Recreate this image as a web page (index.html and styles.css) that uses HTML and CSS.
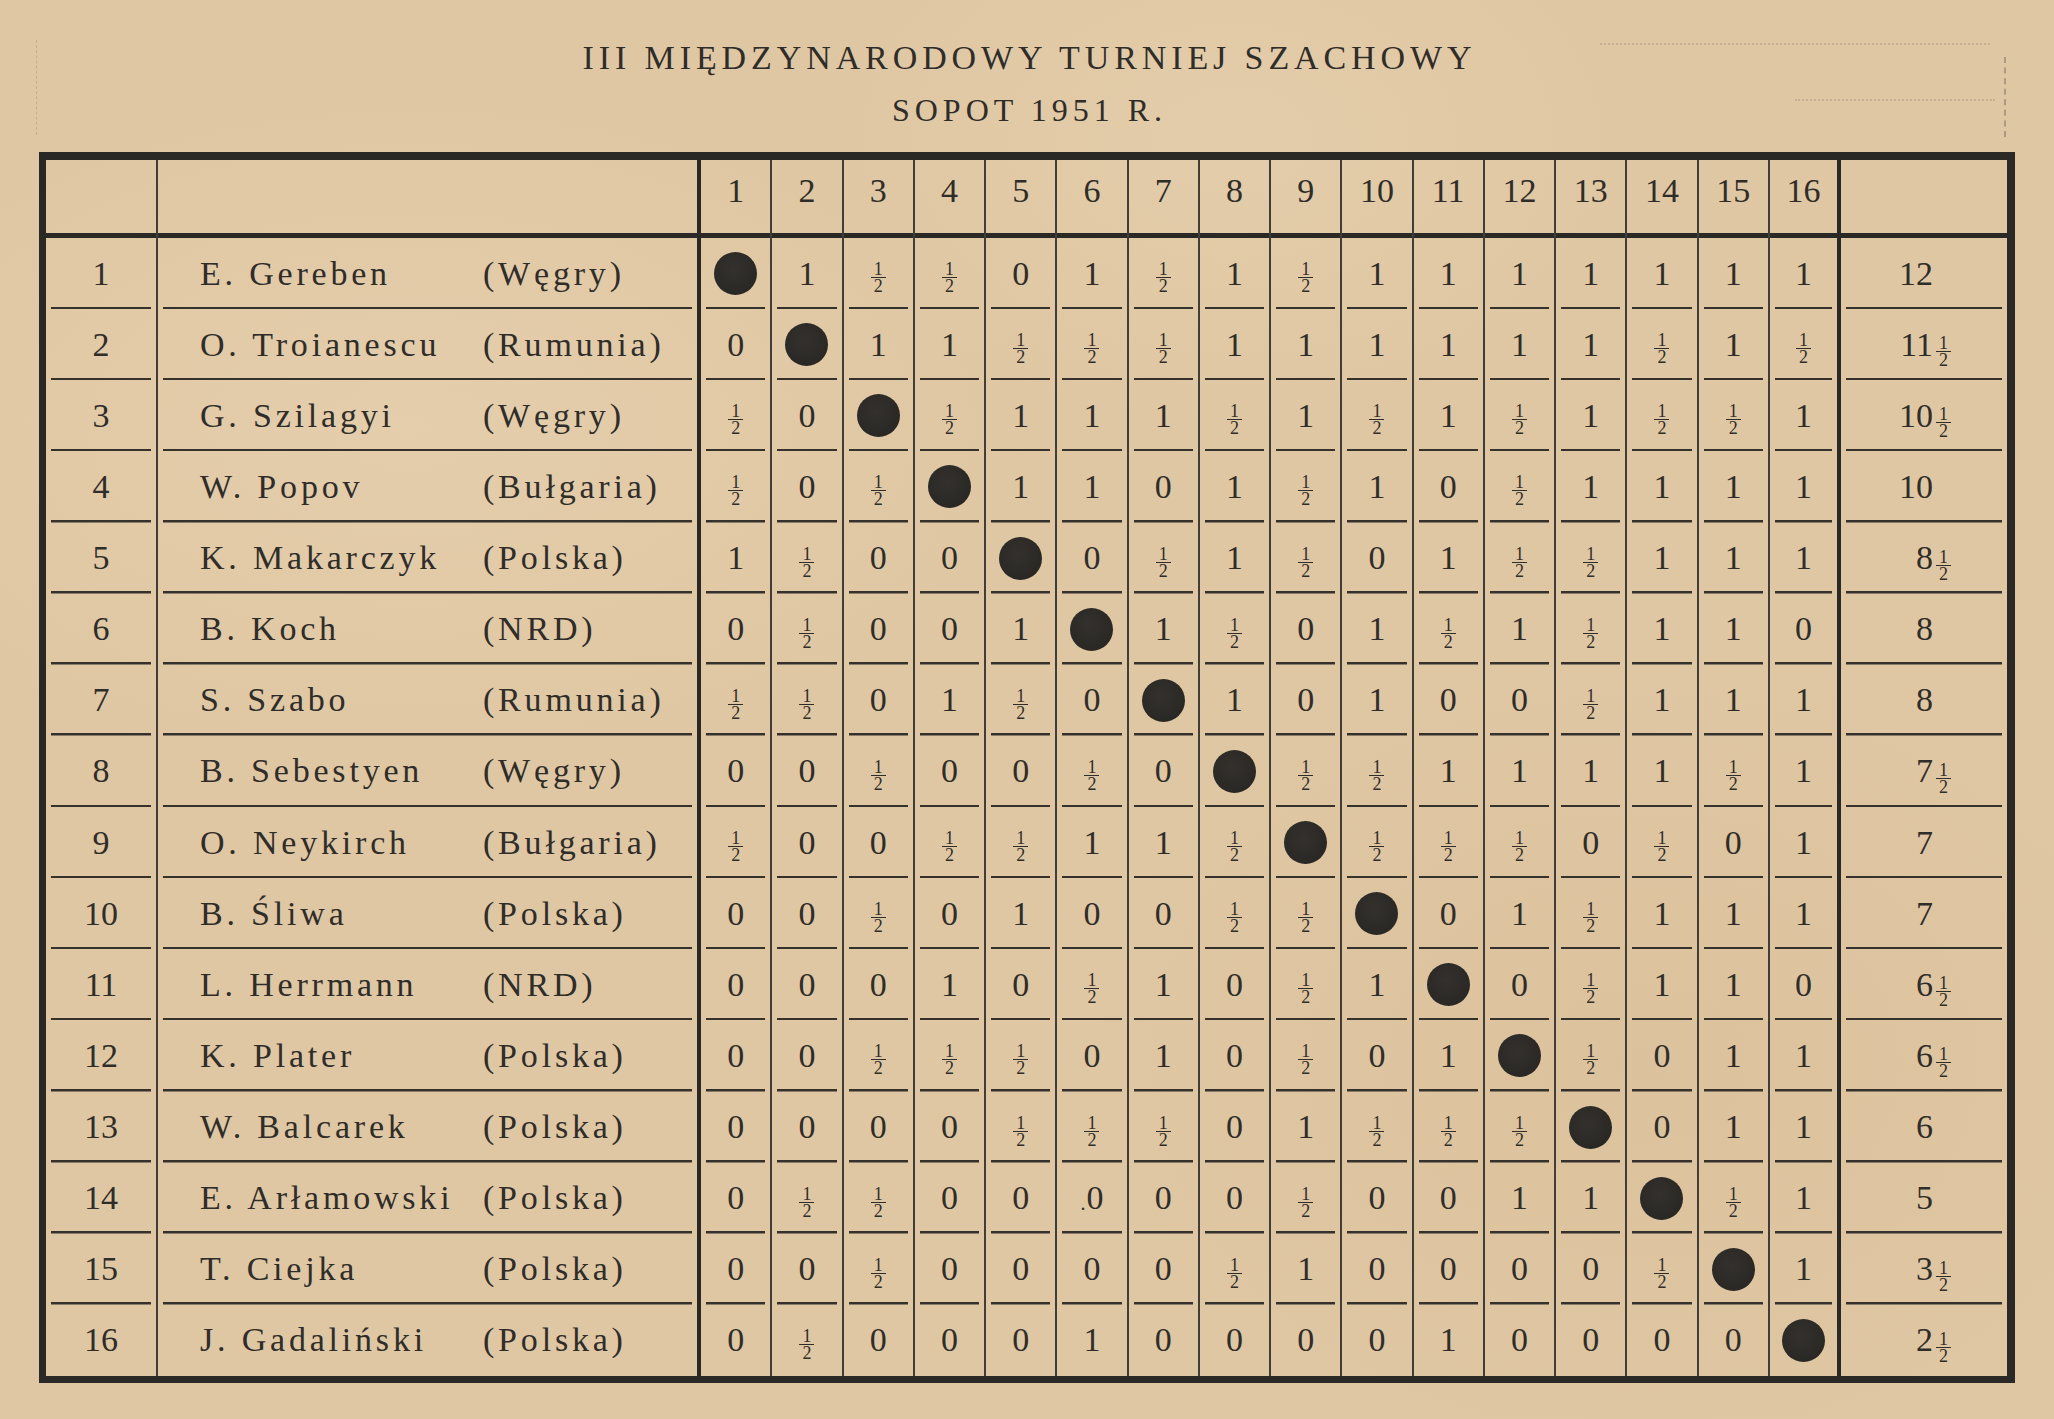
FILE: index.html
```html
<!DOCTYPE html>
<html lang="pl">
<head>
<meta charset="utf-8">
<title>III Międzynarodowy Turniej Szachowy — Sopot 1951 r.</title>
<link rel="stylesheet" href="styles.css">
</head>
<body>
<div class="page">
  <header class="heading">
    <div class="l1">III MIĘDZYNARODOWY TURNIEJ SZACHOWY</div>
    <div class="l2">SOPOT 1951 R.</div>
  </header>

  <section class="table">
    <div class="row head">
      <div class="n"></div><div class="nm"></div>
      <div class="g">1</div><div class="g">2</div><div class="g">3</div><div class="g">4</div><div class="g">5</div><div class="g">6</div><div class="g">7</div><div class="g">8</div><div class="g">9</div><div class="g">10</div><div class="g">11</div><div class="g">12</div><div class="g">13</div><div class="g">14</div><div class="g">15</div><div class="g">16</div>
      <div class="s"></div>
    </div>

    <div class="row">
      <div class="n">1</div><div class="nm"><span class="pl">E. Gereben</span><span>(Węgry)</span></div>
      <div class="g"><span class="dot"></span></div><div class="g">1</div><div class="g"><span class="fr"><span>1</span><span>2</span></span></div><div class="g"><span class="fr"><span>1</span><span>2</span></span></div><div class="g">0</div><div class="g">1</div><div class="g"><span class="fr"><span>1</span><span>2</span></span></div><div class="g">1</div><div class="g"><span class="fr"><span>1</span><span>2</span></span></div><div class="g">1</div><div class="g">1</div><div class="g">1</div><div class="g">1</div><div class="g">1</div><div class="g">1</div><div class="g">1</div>
      <div class="s"><span class="int">12</span></div>
    </div>

    <div class="row">
      <div class="n">2</div><div class="nm"><span class="pl">O. Troianescu</span><span>(Rumunia)</span></div>
      <div class="g">0</div><div class="g"><span class="dot"></span></div><div class="g">1</div><div class="g">1</div><div class="g"><span class="fr"><span>1</span><span>2</span></span></div><div class="g"><span class="fr"><span>1</span><span>2</span></span></div><div class="g"><span class="fr"><span>1</span><span>2</span></span></div><div class="g">1</div><div class="g">1</div><div class="g">1</div><div class="g">1</div><div class="g">1</div><div class="g">1</div><div class="g"><span class="fr"><span>1</span><span>2</span></span></div><div class="g">1</div><div class="g"><span class="fr"><span>1</span><span>2</span></span></div>
      <div class="s"><span class="int">11</span><span class="fr"><span>1</span><span>2</span></span></div>
    </div>

    <div class="row">
      <div class="n">3</div><div class="nm"><span class="pl">G. Szilagyi</span><span>(Węgry)</span></div>
      <div class="g"><span class="fr"><span>1</span><span>2</span></span></div><div class="g">0</div><div class="g"><span class="dot"></span></div><div class="g"><span class="fr"><span>1</span><span>2</span></span></div><div class="g">1</div><div class="g">1</div><div class="g">1</div><div class="g"><span class="fr"><span>1</span><span>2</span></span></div><div class="g">1</div><div class="g"><span class="fr"><span>1</span><span>2</span></span></div><div class="g">1</div><div class="g"><span class="fr"><span>1</span><span>2</span></span></div><div class="g">1</div><div class="g"><span class="fr"><span>1</span><span>2</span></span></div><div class="g"><span class="fr"><span>1</span><span>2</span></span></div><div class="g">1</div>
      <div class="s"><span class="int">10</span><span class="fr"><span>1</span><span>2</span></span></div>
    </div>

    <div class="row">
      <div class="n">4</div><div class="nm"><span class="pl">W. Popov</span><span>(Bułgaria)</span></div>
      <div class="g"><span class="fr"><span>1</span><span>2</span></span></div><div class="g">0</div><div class="g"><span class="fr"><span>1</span><span>2</span></span></div><div class="g"><span class="dot"></span></div><div class="g">1</div><div class="g">1</div><div class="g">0</div><div class="g">1</div><div class="g"><span class="fr"><span>1</span><span>2</span></span></div><div class="g">1</div><div class="g">0</div><div class="g"><span class="fr"><span>1</span><span>2</span></span></div><div class="g">1</div><div class="g">1</div><div class="g">1</div><div class="g">1</div>
      <div class="s"><span class="int">10</span></div>
    </div>

    <div class="row">
      <div class="n">5</div><div class="nm"><span class="pl">K. Makarczyk</span><span>(Polska)</span></div>
      <div class="g">1</div><div class="g"><span class="fr"><span>1</span><span>2</span></span></div><div class="g">0</div><div class="g">0</div><div class="g"><span class="dot"></span></div><div class="g">0</div><div class="g"><span class="fr"><span>1</span><span>2</span></span></div><div class="g">1</div><div class="g"><span class="fr"><span>1</span><span>2</span></span></div><div class="g">0</div><div class="g">1</div><div class="g"><span class="fr"><span>1</span><span>2</span></span></div><div class="g"><span class="fr"><span>1</span><span>2</span></span></div><div class="g">1</div><div class="g">1</div><div class="g">1</div>
      <div class="s"><span class="int">8</span><span class="fr"><span>1</span><span>2</span></span></div>
    </div>

    <div class="row">
      <div class="n">6</div><div class="nm"><span class="pl">B. Koch</span><span>(NRD)</span></div>
      <div class="g">0</div><div class="g"><span class="fr"><span>1</span><span>2</span></span></div><div class="g">0</div><div class="g">0</div><div class="g">1</div><div class="g"><span class="dot"></span></div><div class="g">1</div><div class="g"><span class="fr"><span>1</span><span>2</span></span></div><div class="g">0</div><div class="g">1</div><div class="g"><span class="fr"><span>1</span><span>2</span></span></div><div class="g">1</div><div class="g"><span class="fr"><span>1</span><span>2</span></span></div><div class="g">1</div><div class="g">1</div><div class="g">0</div>
      <div class="s"><span class="int">8</span></div>
    </div>

    <div class="row">
      <div class="n">7</div><div class="nm"><span class="pl">S. Szabo</span><span>(Rumunia)</span></div>
      <div class="g"><span class="fr"><span>1</span><span>2</span></span></div><div class="g"><span class="fr"><span>1</span><span>2</span></span></div><div class="g">0</div><div class="g">1</div><div class="g"><span class="fr"><span>1</span><span>2</span></span></div><div class="g">0</div><div class="g"><span class="dot"></span></div><div class="g">1</div><div class="g">0</div><div class="g">1</div><div class="g">0</div><div class="g">0</div><div class="g"><span class="fr"><span>1</span><span>2</span></span></div><div class="g">1</div><div class="g">1</div><div class="g">1</div>
      <div class="s"><span class="int">8</span></div>
    </div>

    <div class="row">
      <div class="n">8</div><div class="nm"><span class="pl">B. Sebestyen</span><span>(Węgry)</span></div>
      <div class="g">0</div><div class="g">0</div><div class="g"><span class="fr"><span>1</span><span>2</span></span></div><div class="g">0</div><div class="g">0</div><div class="g"><span class="fr"><span>1</span><span>2</span></span></div><div class="g">0</div><div class="g"><span class="dot"></span></div><div class="g"><span class="fr"><span>1</span><span>2</span></span></div><div class="g"><span class="fr"><span>1</span><span>2</span></span></div><div class="g">1</div><div class="g">1</div><div class="g">1</div><div class="g">1</div><div class="g"><span class="fr"><span>1</span><span>2</span></span></div><div class="g">1</div>
      <div class="s"><span class="int">7</span><span class="fr"><span>1</span><span>2</span></span></div>
    </div>

    <div class="row">
      <div class="n">9</div><div class="nm"><span class="pl">O. Neykirch</span><span>(Bułgaria)</span></div>
      <div class="g"><span class="fr"><span>1</span><span>2</span></span></div><div class="g">0</div><div class="g">0</div><div class="g"><span class="fr"><span>1</span><span>2</span></span></div><div class="g"><span class="fr"><span>1</span><span>2</span></span></div><div class="g">1</div><div class="g">1</div><div class="g"><span class="fr"><span>1</span><span>2</span></span></div><div class="g"><span class="dot"></span></div><div class="g"><span class="fr"><span>1</span><span>2</span></span></div><div class="g"><span class="fr"><span>1</span><span>2</span></span></div><div class="g"><span class="fr"><span>1</span><span>2</span></span></div><div class="g">0</div><div class="g"><span class="fr"><span>1</span><span>2</span></span></div><div class="g">0</div><div class="g">1</div>
      <div class="s"><span class="int">7</span></div>
    </div>

    <div class="row">
      <div class="n">10</div><div class="nm"><span class="pl">B. Śliwa</span><span>(Polska)</span></div>
      <div class="g">0</div><div class="g">0</div><div class="g"><span class="fr"><span>1</span><span>2</span></span></div><div class="g">0</div><div class="g">1</div><div class="g">0</div><div class="g">0</div><div class="g"><span class="fr"><span>1</span><span>2</span></span></div><div class="g"><span class="fr"><span>1</span><span>2</span></span></div><div class="g"><span class="dot"></span></div><div class="g">0</div><div class="g">1</div><div class="g"><span class="fr"><span>1</span><span>2</span></span></div><div class="g">1</div><div class="g">1</div><div class="g">1</div>
      <div class="s"><span class="int">7</span></div>
    </div>

    <div class="row">
      <div class="n">11</div><div class="nm"><span class="pl">L. Herrmann</span><span>(NRD)</span></div>
      <div class="g">0</div><div class="g">0</div><div class="g">0</div><div class="g">1</div><div class="g">0</div><div class="g"><span class="fr"><span>1</span><span>2</span></span></div><div class="g">1</div><div class="g">0</div><div class="g"><span class="fr"><span>1</span><span>2</span></span></div><div class="g">1</div><div class="g"><span class="dot"></span></div><div class="g">0</div><div class="g"><span class="fr"><span>1</span><span>2</span></span></div><div class="g">1</div><div class="g">1</div><div class="g">0</div>
      <div class="s"><span class="int">6</span><span class="fr"><span>1</span><span>2</span></span></div>
    </div>

    <div class="row">
      <div class="n">12</div><div class="nm"><span class="pl">K. Plater</span><span>(Polska)</span></div>
      <div class="g">0</div><div class="g">0</div><div class="g"><span class="fr"><span>1</span><span>2</span></span></div><div class="g"><span class="fr"><span>1</span><span>2</span></span></div><div class="g"><span class="fr"><span>1</span><span>2</span></span></div><div class="g">0</div><div class="g">1</div><div class="g">0</div><div class="g"><span class="fr"><span>1</span><span>2</span></span></div><div class="g">0</div><div class="g">1</div><div class="g"><span class="dot"></span></div><div class="g"><span class="fr"><span>1</span><span>2</span></span></div><div class="g">0</div><div class="g">1</div><div class="g">1</div>
      <div class="s"><span class="int">6</span><span class="fr"><span>1</span><span>2</span></span></div>
    </div>

    <div class="row">
      <div class="n">13</div><div class="nm"><span class="pl">W. Balcarek</span><span>(Polska)</span></div>
      <div class="g">0</div><div class="g">0</div><div class="g">0</div><div class="g">0</div><div class="g"><span class="fr"><span>1</span><span>2</span></span></div><div class="g"><span class="fr"><span>1</span><span>2</span></span></div><div class="g"><span class="fr"><span>1</span><span>2</span></span></div><div class="g">0</div><div class="g">1</div><div class="g"><span class="fr"><span>1</span><span>2</span></span></div><div class="g"><span class="fr"><span>1</span><span>2</span></span></div><div class="g"><span class="fr"><span>1</span><span>2</span></span></div><div class="g"><span class="dot"></span></div><div class="g">0</div><div class="g">1</div><div class="g">1</div>
      <div class="s"><span class="int">6</span></div>
    </div>

    <div class="row">
      <div class="n">14</div><div class="nm"><span class="pl">E. Arłamowski</span><span>(Polska)</span></div>
      <div class="g">0</div><div class="g"><span class="fr"><span>1</span><span>2</span></span></div><div class="g"><span class="fr"><span>1</span><span>2</span></span></div><div class="g">0</div><div class="g">0</div><div class="g"><span class="speck">.</span>0</div><div class="g">0</div><div class="g">0</div><div class="g"><span class="fr"><span>1</span><span>2</span></span></div><div class="g">0</div><div class="g">0</div><div class="g">1</div><div class="g">1</div><div class="g"><span class="dot"></span></div><div class="g"><span class="fr"><span>1</span><span>2</span></span></div><div class="g">1</div>
      <div class="s"><span class="int">5</span></div>
    </div>

    <div class="row">
      <div class="n">15</div><div class="nm"><span class="pl">T. Ciejka</span><span>(Polska)</span></div>
      <div class="g">0</div><div class="g">0</div><div class="g"><span class="fr"><span>1</span><span>2</span></span></div><div class="g">0</div><div class="g">0</div><div class="g">0</div><div class="g">0</div><div class="g"><span class="fr"><span>1</span><span>2</span></span></div><div class="g">1</div><div class="g">0</div><div class="g">0</div><div class="g">0</div><div class="g">0</div><div class="g"><span class="fr"><span>1</span><span>2</span></span></div><div class="g"><span class="dot"></span></div><div class="g">1</div>
      <div class="s"><span class="int">3</span><span class="fr"><span>1</span><span>2</span></span></div>
    </div>

    <div class="row">
      <div class="n">16</div><div class="nm"><span class="pl">J. Gadaliński</span><span>(Polska)</span></div>
      <div class="g">0</div><div class="g"><span class="fr"><span>1</span><span>2</span></span></div><div class="g">0</div><div class="g">0</div><div class="g">0</div><div class="g">1</div><div class="g">0</div><div class="g">0</div><div class="g">0</div><div class="g">0</div><div class="g">1</div><div class="g">0</div><div class="g">0</div><div class="g">0</div><div class="g">0</div><div class="g"><span class="dot"></span></div>
      <div class="s"><span class="int">2</span><span class="fr"><span>1</span><span>2</span></span></div>
    </div>
  </section>

  <span class="mark mark-v"></span>
  <span class="mark mark-h1"></span>
  <span class="mark mark-h2"></span>
  <span class="mark mark-l"></span>
</div>
</body>
</html>
```

FILE: styles.css
```css
:root {
  --ink: #2b2926;
  --rule: #35322e;
  --text: #2f2d2a;
  --paper: #e0c7a3;
}

html, body {
  margin: 0;
  padding: 0;
}

body {
  background-color: var(--paper);
  background-image:
    radial-gradient(ellipse 900px 500px at 20% 30%, rgba(233, 212, 180, 0.5), transparent 70%),
    radial-gradient(ellipse 800px 600px at 80% 75%, rgba(214, 189, 150, 0.45), transparent 70%),
    radial-gradient(ellipse 600px 400px at 60% 10%, rgba(231, 210, 177, 0.5), transparent 70%);
  font-family: "Liberation Serif", "DejaVu Serif", serif;
  color: var(--text);
}

.page {
  position: relative;
  width: 2054px;
  height: 1419px;
  overflow: hidden;
}

/* ---------- heading ---------- */
.heading {
  padding-top: 32px;
  text-align: center;
}

.heading .l1 {
  font-size: 34px;
  line-height: 52px;
  letter-spacing: 4.9px;
  padding-left: 5px;
}

.heading .l2 {
  font-size: 32px;
  line-height: 52px;
  letter-spacing: 5px;
  padding-left: 5px;
}

/* ---------- table ---------- */
.table {
  box-sizing: border-box;
  width: 1976px;
  margin: 16px 0 0 39px;
  border-style: solid;
  border-color: var(--ink);
  border-width: 8px 8px 7px 7px;
}

.row {
  display: grid;
  grid-template-columns: 112px 543px repeat(16, 71.25px) 166px;
  height: 71.125px;
}

.row.head {
  height: 78px;
}

.row > div {
  box-sizing: border-box;
  display: flex;
  align-items: center;
  justify-content: center;
  font-size: 34px;
  line-height: 1;
  border-right: 2px solid #413d38;
  background-image: linear-gradient(var(--rule), var(--rule));
  background-repeat: no-repeat;
  background-position: 5px 100%;
  background-size: calc(100% - 10px) 2.5px;
}

.row:last-child > div {
  background-image: none;
}

.row.head > div {
  padding-bottom: 16px;
  background-position: 0 100%;
  background-size: 100% 5px;
  background-image: linear-gradient(var(--ink), var(--ink));
}

/* thick rules: after the name column and after game column 16 */
.row > .nm,
.row > div:nth-child(18) {
  border-right: 4px solid var(--ink);
}

.row > .s {
  border-right: none;
}

/* ---------- name column ---------- */
.nm {
  justify-content: flex-start !important;
  padding-left: 42px;
  letter-spacing: 3.8px;
  white-space: nowrap;
}

.pl {
  display: inline-block;
  width: 283px;
}

/* ---------- score column ---------- */
.s {
  justify-content: flex-start !important;
}

.int {
  display: inline-block;
  width: 92px;
  text-align: right;
}

.s .fr {
  margin-left: 3px;
  margin-top: 14px;
}

/* ---------- fractions & dots ---------- */
.fr {
  display: inline-flex;
  flex-direction: column;
  align-items: center;
  font-size: 18px;
  line-height: 14px;
  margin-top: 8px;
}

.fr > span:first-child {
  padding: 0 3px 1px;
  border-bottom: 1.5px solid var(--text);
  margin-bottom: 1px;
}

.dot {
  display: block;
  width: 43px;
  height: 43px;
  border-radius: 50%;
  background: radial-gradient(circle at 45% 40%, #34312d 0%, #2a2825 70%, #24221f 100%);
}

.speck {
  font-size: 20px;
  margin-right: 1px;
  align-self: center;
  margin-top: 10px;
}

/* ---------- faint paper marks ---------- */
.mark {
  position: absolute;
  display: block;
  opacity: 0.35;
}

.mark-v {
  left: 2004px;
  top: 57px;
  height: 80px;
  border-left: 2px dashed #4a4540;
}

.mark-h1 {
  left: 1600px;
  top: 43px;
  width: 390px;
  border-top: 2px dotted #5a544c;
  opacity: 0.2;
}

.mark-h2 {
  left: 1795px;
  top: 99px;
  width: 200px;
  border-top: 2px dotted #5a544c;
  opacity: 0.2;
}

.mark-l {
  left: 36px;
  top: 40px;
  height: 95px;
  border-left: 1px dashed #5a544c;
  opacity: 0.2;
}
```
